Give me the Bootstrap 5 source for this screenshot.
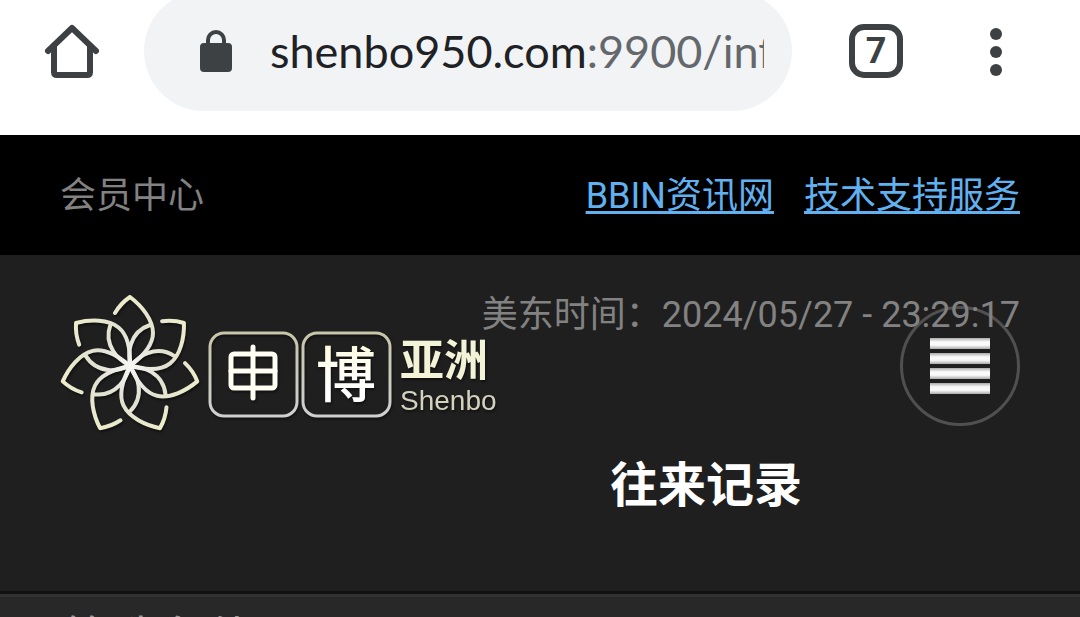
<!DOCTYPE html>
<html lang="zh-CN">
<head>
<meta charset="utf-8">
<meta name="viewport" content="width=device-width, initial-scale=1">
<title>往来记录</title>
<link href="https://cdn.jsdelivr.net/npm/bootstrap@5.3.0/dist/css/bootstrap.min.css" rel="stylesheet">
<style>
  body { background: #1f1f1f; color: #828282; font-family: Roboto, "Noto Sans CJK SC", sans-serif; font-size: 36px; line-height: 48px; overflow: hidden; }
  .browser-bar { background: #fff; height: 135px; padding: 0 78px 0 40px; }
  .tool-icon { line-height: 0; }
  .address { background: #f1f3f5; height: 120px; margin: -9px 57px 0 40px; border-radius: 60px; padding: 0 28px 0 54px; min-width: 0; }
  .address-text { font-family: Lato, sans-serif; font-size: 45px; line-height: 60px; color: #202124; margin-left: 36px; white-space: nowrap; }
  .address-text span { color: #64676b; }
  .tab-count { width: 54px; height: 54px; margin: 24px 87px 0 0; border: 6px solid #3e4144; border-radius: 15px; color: #3e4144; font: 700 36px/42px Roboto, sans-serif; }
  .top-strip { background: #000; height: 120px; padding: 1px 60px 0; }
  .top-strip a { color: #61b1f0; text-decoration-thickness: 3px; text-underline-offset: 3px; }
  .strip-links { gap: 30px; }
  .site-header { height: 339px; padding: 0 60px; border-bottom: 3px solid #121212; }
  .clock { top: 36px; right: 60px; }
  .logo { margin-top: 35px; margin-left: -2px; filter: drop-shadow(1px 2px 1px #111); }
  .menu-toggle { width: 120px; height: 120px; margin-top: 51px; border: 3px solid #505050; border-radius: 50%; }
  .menu-toggle i { width: 60px; height: 11px; background: linear-gradient(#aaa, #fafafa 35%, #fafafa 65%, #aaa); }
  h1 { font-size: 48px; font-weight: 700; line-height: 60px; color: #fff; padding-left: 332px; }
  .record-list { background: #282828; border-top: 3px solid #323232; padding: 13px 62px; font-size: 48px; line-height: 60px; color: #999; }
</style>
</head>
<body>
<header class="browser-bar d-flex align-items-start">
  <button class="btn p-0 border-0 tool-icon flex-shrink-0" type="button" aria-label="Home">
    <svg width="64" height="104" viewBox="0 0 64 104" fill="none" stroke="#3e4144" stroke-width="6" stroke-linejoin="round" stroke-linecap="round"><path d="M8 51L32 28L56 51"/><path d="M14 46V72Q14 75 17 75H47Q50 75 50 72V46"/></svg>
  </button>
  <div class="address d-flex align-items-center flex-grow-1">
    <svg class="flex-shrink-0" width="36" height="46" viewBox="0 0 36 46"><rect x="2" y="15" width="32" height="29" rx="4" fill="#3e4144"/><path d="M10 18V12a8 8 0 0 1 16 0V18" fill="none" stroke="#3e4144" stroke-width="4"/></svg>
    <div class="address-text overflow-hidden flex-grow-1">shenbo950.com<span>:9900/inf</span></div>
  </div>
  <button class="btn p-0 tab-count flex-shrink-0" type="button">7</button>
  <button class="btn p-0 border-0 tool-icon flex-shrink-0" type="button" aria-label="More">
    <svg width="12" height="104" viewBox="0 0 12 104" fill="#3e4144"><circle cx="6" cy="34" r="6"/><circle cx="6" cy="52" r="6"/><circle cx="6" cy="70" r="6"/></svg>
  </button>
</header>
<nav class="top-strip d-flex align-items-center justify-content-between">
  <span>会员中心</span>
  <div class="strip-links d-flex"><a href="#">BBIN资讯网</a><a href="#">技术支持服务</a></div>
</nav>
<section class="site-header position-relative">
  <div class="clock position-absolute">美东时间：2024/05/27 - 23:29:17</div>
  <div class="d-flex justify-content-between align-items-start">
    <svg class="logo" width="450" height="150" viewBox="0 0 450 150" role="img" aria-label="申博亚洲 Shenbo">
      <defs>
        <radialGradient id="petalTone" gradientUnits="userSpaceOnUse" cx="0" cy="0" r="70"><stop offset="0" stop-color="#f6f6f4"/><stop offset=".5" stop-color="#e0e0d2"/><stop offset="1" stop-color="#ededcb"/></radialGradient>
        <linearGradient id="frameTone" x1="0" y1="0" x2="0" y2="1"><stop offset="0" stop-color="#c6c6a9"/><stop offset="1" stop-color="#cfcfd2"/></linearGradient>
        <linearGradient id="inkTone" x1="0" y1="0" x2="0" y2="1"><stop offset=".2" stop-color="#fbfbe2"/><stop offset=".7" stop-color="#fff"/></linearGradient>
        <path id="petal" d="M-15 -53Q-9 -63 0 -69C12 -60 23 -46 23 -33C23 -22 16 -12 0 0C-1 -8 -1 -17 1 -22C4 -31 11 -38 20 -41"/>
      </defs>
      <g transform="translate(72 76)" fill="none" stroke="url(#petalTone)" stroke-width="4" stroke-linecap="round" stroke-linejoin="round">
        <use href="#petal"/><use href="#petal" transform="rotate(51.43)"/><use href="#petal" transform="rotate(102.86)"/><use href="#petal" transform="rotate(154.29)"/><use href="#petal" transform="rotate(205.71)"/><use href="#petal" transform="rotate(257.14)"/><use href="#petal" transform="rotate(308.57)"/>
      </g>
      <g fill="none" stroke="url(#frameTone)" stroke-width="3"><rect x="152" y="43" width="87" height="83" rx="14"/><rect x="245" y="43" width="87" height="83" rx="14"/></g>
      <g fill="none" stroke="#fefef2" stroke-width="5" stroke-linejoin="round" stroke-linecap="round"><rect x="173" y="64" width="44" height="34" rx="3"/><path d="M173 81H217"/><path d="M195 57V108"/></g>
      <text x="258" y="107" font-size="60" font-weight="500" fill="url(#inkTone)" font-family="Noto Sans CJK SC, sans-serif">博</text>
      <text x="342" y="86" font-size="44" font-weight="700" fill="#f3f3d8" font-family="Noto Sans CJK SC, sans-serif">亚洲</text>
      <text x="342" y="120" font-size="28" fill="#d2d2bf" font-family="Liberation Sans, sans-serif">Shenbo</text>
    </svg>
    <button class="btn p-0 menu-toggle d-flex flex-column align-items-center justify-content-center gap-1" type="button" aria-label="Menu"><i></i><i></i><i></i><i></i></button>
  </div>
  <h1 class="mt-3 mb-0 text-center">往来记录</h1>
</section>
<main class="record-list">筛选条件</main>
<script src="https://cdn.jsdelivr.net/npm/bootstrap@5.3.0/dist/js/bootstrap.bundle.min.js"></script>
</body>
</html>
